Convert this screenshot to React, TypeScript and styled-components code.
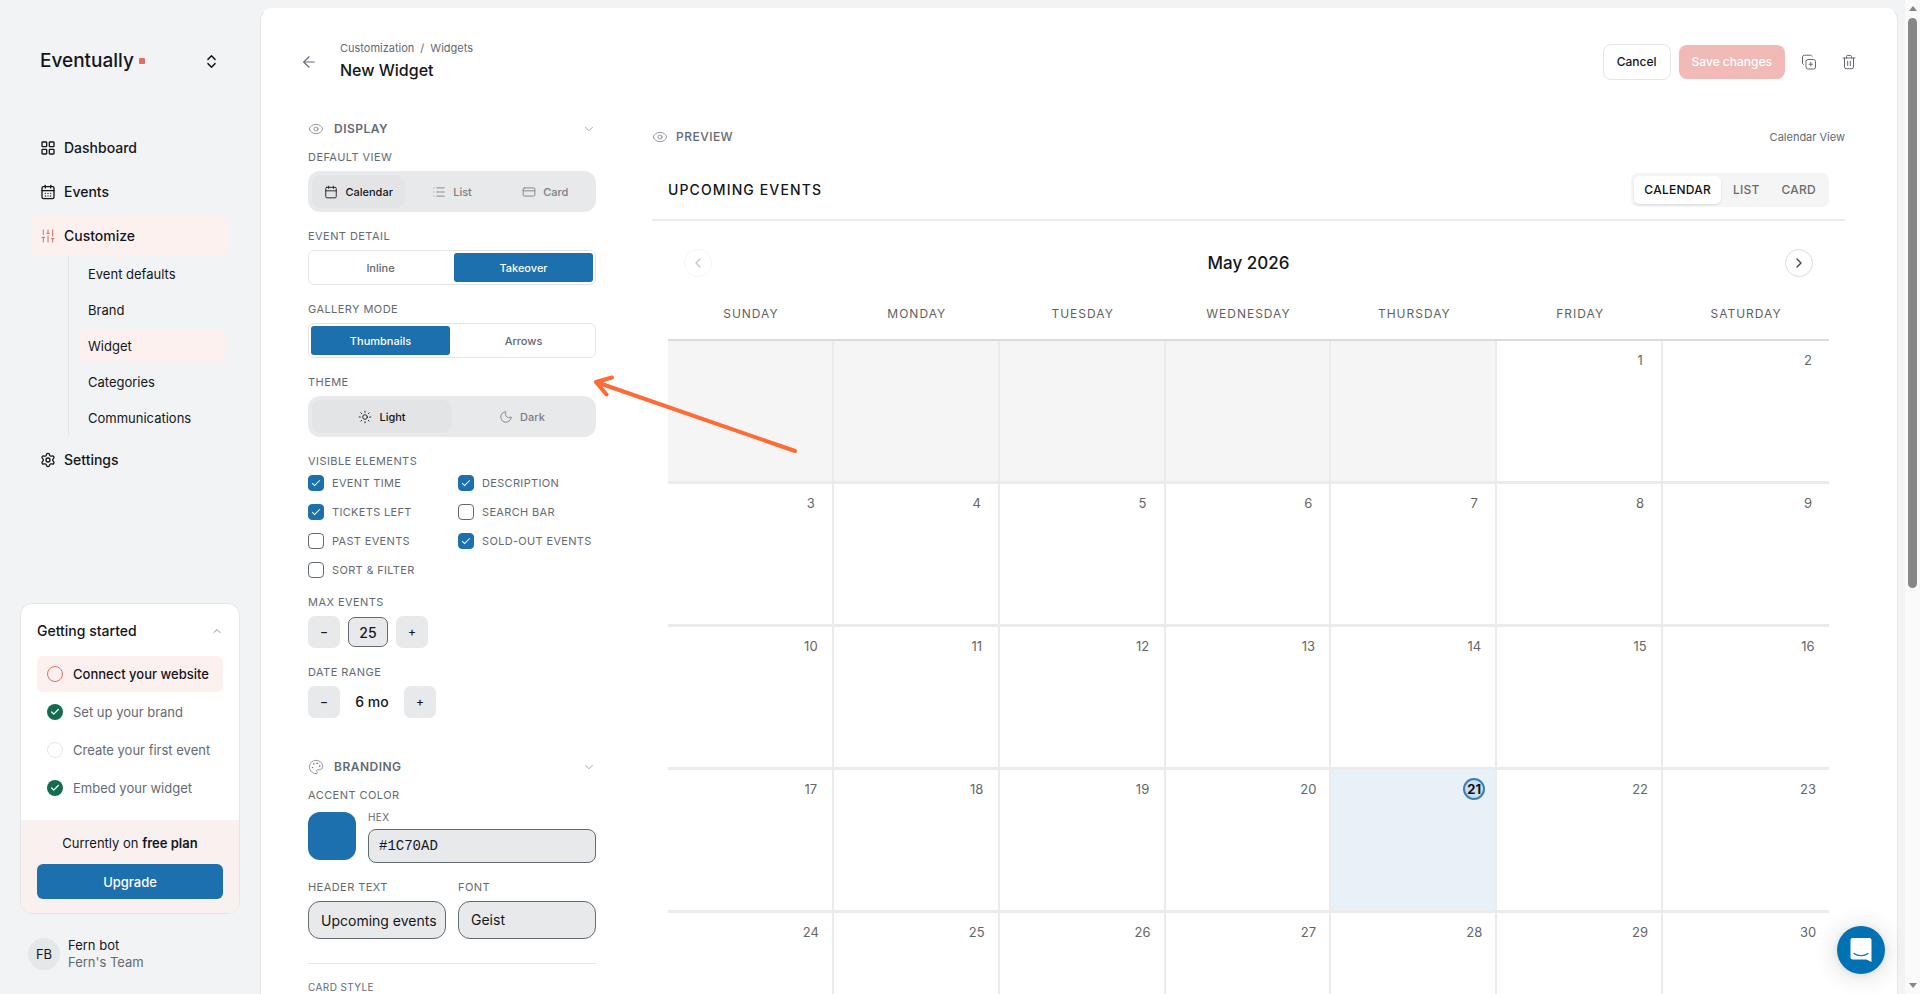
import React, { useState } from "react";
import styled, { createGlobalStyle, css } from "styled-components";
import {
  ArrowLeft,
  Calendar,
  CalendarDays,
  Check,
  ChevronDown,
  ChevronLeft,
  ChevronRight,
  ChevronsUpDown,
  ChevronUp,
  CreditCard,
  Eye,
  LayoutGrid,
  List,
  Moon,
  Palette,
  Settings,
  SlidersVertical,
  Sun,
} from "lucide-react";

const ink = "#14161c";
const muted = "#646a73";
const accent = "#1c70ad";
const line = "#e3e5e8";
const blush = "#fdf1ef";
const field = "#e8e9eb";

const GlobalStyle = createGlobalStyle`
  *, *::before, *::after { box-sizing: border-box; }
  body {
    margin: 0;
    background: #f1f3f4;
    color: ${ink};
    font-family: Inter, "Liberation Sans", sans-serif;
    font-size: 14px;
    line-height: 16px;
  }
  button, input, select { font: inherit; color: inherit; margin: 0; }
  button { cursor: pointer; border: 0; background: none; padding: 0; }
  a { color: inherit; text-decoration: none; }
  h1, h2, h3, p, ul { margin: 0; padding: 0; }
  ul { list-style: none; }
`;

const Shell = styled.div`
  position: relative;
  display: grid;
  grid-template-columns: 260px minmax(0, 1fr) 15px;
  height: 100vh;
  overflow: hidden;
`;

/* ---------- Sidebar ---------- */

const Sidebar = styled.aside`
  display: flex;
  flex-direction: column;
  padding: 45px 20px 23px;
  min-height: 0;
`;

const BrandButton = styled.button`
  display: flex;
  align-items: center;
  justify-content: space-between;
  height: 32px;
  padding: 0 20px;
  font-size: 19px;
  font-weight: 500;
  line-height: 24px;
`;

const BrandName = styled.span`
  display: flex;
  align-items: center;
  gap: 5px;
`;

const BrandDot = styled.span`
  width: 6px;
  height: 6px;
  border-radius: 1px;
  background: #e0705f;
`;

const Nav = styled.nav`
  display: flex;
  flex-direction: column;
  gap: 4px;
  padding: 0 12px;
  margin-top: 51px;
`;

const NavLink = styled.a<{ $active?: boolean }>`
  display: flex;
  align-items: center;
  gap: 8px;
  height: 40px;
  padding: 0 8px;
  border-radius: 6px;
  font-size: 14px;
  font-weight: 500;
  background: ${(p) => (p.$active ? blush : "transparent")};
  svg { color: ${(p) => (p.$active ? "#db6a5e" : "inherit")}; }
`;

const SubNav = styled.ul`
  display: flex;
  flex-direction: column;
  gap: 4px;
  margin: -4px 0 0 36px;
  padding: 2px 2px 2px 11px;
  border-left: 1px solid ${line};
`;

const SubLink = styled.a<{ $active?: boolean }>`
  display: flex;
  align-items: center;
  height: 32px;
  padding: 0 8px;
  border-radius: 4px;
  font-size: 13px;
  background: ${(p) => (p.$active ? blush : "transparent")};
`;

const StartCard = styled.section`
  margin-top: auto;
  border: 1px solid ${line};
  border-radius: 12px;
  background: #fff;
  overflow: hidden;
`;

const StartTop = styled.div`
  padding: 17px 16px 14px;
`;

const StartTitle = styled.h2`
  display: flex;
  align-items: center;
  justify-content: space-between;
  height: 20px;
  margin-bottom: 15px;
  font-size: 14px;
  font-weight: 500;
  svg { color: ${muted}; }
`;

const Steps = styled.ul`
  display: flex;
  flex-direction: column;
  gap: 2px;
`;

const Step = styled.li<{ $current?: boolean }>`
  display: flex;
  align-items: center;
  gap: 10px;
  height: 36px;
  padding: 0 10px;
  border-radius: 6px;
  font-size: 13px;
  color: ${(p) => (p.$current ? ink : muted)};
  font-weight: ${(p) => (p.$current ? 500 : 400)};
  background: ${(p) => (p.$current ? blush : "transparent")};
`;

const StepMark = styled.span<{ $state: "done" | "current" | "todo" }>`
  display: grid;
  place-items: center;
  width: 16px;
  height: 16px;
  border-radius: 50%;
  color: #fff;
  ${(p) =>
    p.$state === "done"
      ? css`background: #146c50;`
      : css`border: 1px solid ${p.$state === "current" ? "#e0706b" : line};`}
`;

const Plan = styled.div`
  display: flex;
  flex-direction: column;
  gap: 13px;
  padding: 15px 16px 14px;
  background: #f9f1ef;
  text-align: center;
  font-size: 13px;
  b { font-weight: 600; }
`;

const UpgradeButton = styled.button`
  height: 35px;
  border-radius: 6px;
  background: ${accent};
  color: #fff;
  font-size: 13px;
  font-weight: 500;
`;

const User = styled.div`
  display: flex;
  align-items: center;
  gap: 8px;
  margin-top: 23px;
  padding: 0 8px;
  font-size: 13px;
  line-height: 17px;
  span { display: block; }
  span + span { color: ${muted}; }
`;

const Avatar = styled.div`
  display: grid;
  place-items: center;
  width: 32px;
  height: 32px;
  border-radius: 50%;
  background: #e6e7e8;
`;

/* ---------- Main card ---------- */

const MainArea = styled.main`
  min-height: 0;
  padding: 8px 7px 0 0;
  overflow: hidden auto;
  scrollbar-width: none;
`;

const MainCard = styled.div`
  min-height: 100%;
  border: 1px solid ${line};
  border-top-color: #fff;
  border-radius: 12px;
  background: #fff;
`;

const TopBar = styled.header`
  display: flex;
  align-items: center;
  justify-content: space-between;
  padding: 32px 32px 0;
  height: 74px;
`;

const TitleGroup = styled.div`
  display: flex;
  align-items: center;
  gap: 15px;
`;

const TitleText = styled.div`
  padding-bottom: 3px;
`;

const IconButton = styled.button`
  display: grid;
  place-items: center;
  width: 32px;
  height: 32px;
  color: ${muted};
`;

const Crumbs = styled.nav`
  display: flex;
  gap: 6px;
  margin-bottom: 3px;
  font-size: 11px;
  color: ${muted};
`;

const PageTitle = styled.h1`
  font-size: 16px;
  font-weight: 500;
  line-height: 22px;
`;

const Actions = styled.div`
  display: flex;
  align-items: center;
  gap: 8px;
`;

const ActionButton = styled.button<{ $primary?: boolean }>`
  height: ${(p) => (p.$primary ? 34 : 36)}px;
  padding: 0 13px;
  border-radius: 8px;
  font-size: 12px;
  font-weight: 500;
  ${(p) =>
    p.$primary
      ? css`background: #f1bab6; color: #fff;`
      : css`border: 1px solid ${line}; background: #fff;`}
`;

const Columns = styled.div`
  display: flex;
  gap: 56px;
  padding: 37px 52px 40px 47px;
`;

/* ---------- Options panel ---------- */

const Options = styled.div`
  flex: none;
  width: 288px;
`;

const Section = styled.section`
  display: flex;
  flex-direction: column;
  gap: 16px;
  & + & { margin-top: 40px; }
`;

const SectionHead = styled.button`
  display: flex;
  align-items: center;
  gap: 10px;
  width: 100%;
  height: 18px;
  margin-bottom: -5px;
  font-size: 12px;
  font-weight: 600;
  letter-spacing: 0.04em;
  color: ${muted};
  svg:last-child { margin-left: auto; }
`;

const Field = styled.div`
  display: flex;
  flex-direction: column;
  gap: 6px;
`;

const Caption = styled.span<{ $light?: boolean }>`
  display: block;
  height: 16px;
  font-size: ${(p) => (p.$light ? 10 : 11)}px;
  letter-spacing: 0.04em;
  color: ${muted};
`;

const Pills = styled.div`
  display: flex;
  height: 41px;
  padding: 4px;
  border-radius: 12px;
  background: ${field};
`;

const Pill = styled.button<{ $on: boolean }>`
  display: flex;
  flex: 1;
  align-items: center;
  justify-content: center;
  gap: 7px;
  border-radius: 9px;
  font-size: 11px;
  font-weight: 500;
  color: ${(p) => (p.$on ? ink : "#7a7e85")};
  background: ${(p) => (p.$on ? "#e3e4e6" : "transparent")};
`;

const Switcher = styled.div`
  display: flex;
  gap: 4px;
  height: 35px;
  padding: 2px;
  border: 1px solid ${line};
  border-radius: 6px;
`;

const SwitchButton = styled.button<{ $on: boolean }>`
  flex: 1;
  border-radius: 3px;
  font-size: 11px;
  font-weight: 500;
  color: ${(p) => (p.$on ? "#fff" : muted)};
  background: ${(p) => (p.$on ? accent : "transparent")};
`;

const CheckGrid = styled.div`
  display: grid;
  grid-template-columns: 150px 1fr;
  row-gap: 13px;
`;

const CheckLabel = styled.label`
  display: flex;
  align-items: center;
  gap: 8px;
  height: 16px;
  font-size: 11px;
  letter-spacing: 0.03em;
  white-space: nowrap;
  color: ${muted};
`;

const CheckBox = styled.input`
  appearance: none;
  display: grid;
  place-items: center;
  flex: none;
  width: 16px;
  height: 16px;
  border: 1px solid #646a73;
  border-radius: 4px;
  background: #fff;
  &:checked { background: ${accent}; border-color: ${accent}; }
  &:checked::after {
    content: "";
    width: 8px;
    height: 4px;
    margin-bottom: 2px;
    border: solid #fff;
    border-width: 0 0 1px 1px;
    transform: rotate(-45deg);
  }
`;

const Stepper = styled.div`
  display: flex;
  align-items: center;
  gap: 8px;
  height: 32px;
`;

const StepButton = styled.button`
  width: 32px;
  height: 32px;
  border-radius: 7px;
  background: ${field};
  font-size: 12px;
  font-weight: 500;
`;

const CountInput = styled.input`
  width: 40px;
  height: 30px;
  padding: 0;
  border: 1px solid #646a73;
  border-radius: 7px;
  background: ${field};
  text-align: center;
  font-size: 14px;
  font-weight: 500;
`;

const RangeValue = styled.output`
  width: 48px;
  text-align: center;
  font-size: 14px;
  font-weight: 500;
`;

const ColorRow = styled.div`
  display: flex;
  align-items: center;
  gap: 12px;
`;

const Swatch = styled.button`
  width: 48px;
  height: 48px;
  border-radius: 12px;
  background: ${accent};
`;

const FieldLabel = styled.label<{ $gap?: number }>`
  display: flex;
  flex: 1;
  flex-direction: column;
  gap: ${(p) => p.$gap ?? 6}px;
  min-width: 0;
`;

const fieldBox = css`
  width: 100%;
  border: 1px solid #646a73;
  background: ${field};
`;

const HexInput = styled.input`
  ${fieldBox}
  height: 34px;
  padding: 0 10px;
  border-radius: 8px;
  font-family: "Liberation Mono", monospace;
  font-size: 14px;
`;

const TextInput = styled.input`
  ${fieldBox}
  height: 38px;
  padding: 0 6px 0 12px;
  border-radius: 12px;
`;

const FontSelect = styled.select`
  ${fieldBox}
  appearance: none;
  height: 38px;
  padding: 0 12px;
  border-radius: 12px;
`;

const Pair = styled.div`
  display: flex;
  gap: 12px;
`;

const StyleBlock = styled.div`
  margin-top: 8px;
  padding-top: 15px;
  border-top: 1px solid ${line};
`;

/* ---------- Preview ---------- */

const Preview = styled.section`
  flex: 1;
  min-width: 0;
`;

const PreviewHead = styled.div`
  display: flex;
  align-items: center;
  justify-content: space-between;
  height: 34px;
  font-size: 11px;
  color: ${muted};
`;

const PreviewTitle = styled.h2`
  display: flex;
  align-items: center;
  gap: 8px;
  font-size: 12px;
  font-weight: 500;
  letter-spacing: 0.04em;
`;

const WidgetHead = styled.div`
  display: flex;
  align-items: center;
  justify-content: space-between;
  margin-top: 7px;
  height: 60px;
  padding: 0 16px;
  border-bottom: 2px solid #ebecec;
`;

const WidgetTitle = styled.h3`
  font-size: 14px;
  font-weight: 500;
  letter-spacing: 0.08em;
`;

const Tabs = styled.div`
  display: flex;
  gap: 2px;
  height: 34px;
  padding: 3px;
  border-radius: 7px;
  background: #f5f5f5;
`;

const Tab = styled.button<{ $on: boolean }>`
  padding: 0 10px;
  border-radius: 5px;
  font-size: 12px;
  font-weight: 500;
  letter-spacing: 0.02em;
  color: ${(p) => (p.$on ? "#111" : "#6b6b6b")};
  background: ${(p) => (p.$on ? "#fff" : "transparent")};
  box-shadow: ${(p) => (p.$on ? "0 1px 2px rgba(0, 0, 0, 0.12)" : "none")};
`;

const MonthBar = styled.div`
  display: flex;
  align-items: center;
  justify-content: space-between;
  height: 84px;
  padding: 0 32px;
  font-size: 17px;
  font-weight: 500;
`;

const RoundButton = styled.button`
  display: grid;
  place-items: center;
  width: 28px;
  height: 28px;
  border: 1px solid #dcdcdc;
  border-radius: 50%;
  color: #444;
  &:disabled { opacity: 0.3; }
`;

const Month = styled.table`
  width: calc(100% - 32px);
  margin: 0 16px;
  table-layout: fixed;
  border-collapse: separate;
  border-spacing: 0;
`;

const Weekday = styled.th`
  height: 36px;
  padding: 0 0 16px;
  border-bottom: 2px solid #dadbdb;
  font-size: 12px;
  font-weight: 400;
  letter-spacing: 1px;
  color: #5f5f5f;
`;

const Day = styled.td<{ $kind: "blank" | "today" | "plain" }>`
  height: 143px;
  padding: 8px 10px 0 0;
  vertical-align: top;
  border-right: 2px solid #ebebeb;
  border-bottom: 3px solid #ebebeb;
  background: ${(p) =>
    p.$kind === "blank" ? "#f5f5f5" : p.$kind === "today" ? "#e9f1f8" : "#fff"};
  &:last-child { border-right: 0; }
`;

const DayNumber = styled.span<{ $today: boolean }>`
  display: grid;
  place-items: center;
  width: 22px;
  height: 22px;
  margin-left: auto;
  border-radius: 50%;
  font-size: 13px;
  color: #666;
  ${(p) =>
    p.$today &&
    css`
      border: 2px solid #3c7fb4;
      background: #c9dff0;
      color: #111;
      font-weight: 700;
    `}
`;

/* ---------- Overlays ---------- */

const ScrollTrack = styled.div`
  display: flex;
  flex-direction: column;
  align-items: center;
  padding: 6px 0;
  background: #fafafa;
`;

const ScrollArrow = styled.span<{ $down?: boolean }>`
  border: 4px solid transparent;
  border-${(p) => (p.$down ? "top" : "bottom")}: 5px solid #858585;
  border-${(p) => (p.$down ? "bottom" : "top")}-width: 0;
`;

const ScrollThumb = styled.span`
  width: 9px;
  height: 58%;
  margin: 7px 0 auto;
  border-radius: 5px;
  background: #878787;
`;

const Pointer = styled.svg`
  position: absolute;
  left: 588px;
  top: 368px;
  pointer-events: none;
`;

const ChatButton = styled.button`
  position: absolute;
  right: 35px;
  bottom: 20px;
  display: grid;
  place-items: center;
  width: 48px;
  height: 48px;
  border-radius: 50%;
  background: #0071b2;
  box-shadow: 0 2px 24px rgba(0, 0, 0, 0.16), 0 1px 6px rgba(0, 0, 0, 0.06);
`;

const thin = { size: 16, strokeWidth: 1 };

const DuplicateIcon = () => (
  <svg width="16" height="16" viewBox="0 0 16 16" fill="none" stroke="currentColor" strokeLinecap="round" strokeLinejoin="round">
    <rect x="5" y="5.500" width="9.500" height="9.500" rx="2" />
    <path d="M9.750 8.500v3.500M8 10.250h3.500M2.500 10.500A1.600 1.600 0 0 1 1.500 9V3a1.900 1.900 0 0 1 2-1.800h6A1.600 1.600 0 0 1 11 2.200" />
  </svg>
);

const TrashIcon = () => (
  <svg width="16" height="16" viewBox="0 0 16 16" fill="none" stroke="currentColor" strokeLinecap="round" strokeLinejoin="round">
    <path d="M2 4h12M3.500 4v9A1.700 1.700 0 0 0 5.200 14.700h5.600A1.700 1.700 0 0 0 12.500 13V4M5.500 4V2.700A1.300 1.300 0 0 1 6.800 1.400h2.400a1.300 1.300 0 0 1 1.300 1.300V4M6.700 7.200v4.300M9.300 7.200v4.300" />
  </svg>
);

type Option = { label: string; icon?: React.ReactNode };

function PillGroup({ options, initial, name }: { options: Option[]; initial: string; name: string }) {
  const [value, setValue] = useState(initial);
  return (
    <Pills role="group" aria-labelledby={name}>
      {options.map((o) => (
        <Pill key={o.label} type="button" $on={value === o.label} aria-pressed={value === o.label} onClick={() => setValue(o.label)}>
          {o.icon}
          {o.label}
        </Pill>
      ))}
    </Pills>
  );
}

function SwitchGroup({ options, initial, name }: { options: string[]; initial: string; name: string }) {
  const [value, setValue] = useState(initial);
  return (
    <Switcher role="group" aria-labelledby={name}>
      {options.map((o) => (
        <SwitchButton key={o} type="button" $on={value === o} aria-pressed={value === o} onClick={() => setValue(o)}>
          {o}
        </SwitchButton>
      ))}
    </Switcher>
  );
}

const subLinks = ["Event defaults", "Brand", "Widget", "Categories", "Communications"];

const steps: { label: string; state: "done" | "current" | "todo" }[] = [
  { label: "Connect your website", state: "current" },
  { label: "Set up your brand", state: "done" },
  { label: "Create your first event", state: "todo" },
  { label: "Embed your widget", state: "done" },
];

const elements: [string, boolean][] = [
  ["EVENT TIME", true],
  ["DESCRIPTION", true],
  ["TICKETS LEFT", true],
  ["SEARCH BAR", false],
  ["PAST EVENTS", false],
  ["SOLD-OUT EVENTS", true],
  ["SORT & FILTER", false],
];

const weekdays = ["SUNDAY", "MONDAY", "TUESDAY", "WEDNESDAY", "THURSDAY", "FRIDAY", "SATURDAY"];
const firstWeekday = 5;
const today = 21;
const weeks = Array.from({ length: 5 }, (_, w) =>
  Array.from({ length: 7 }, (_, d) => {
    const n = w * 7 + d - firstWeekday + 1;
    return n >= 1 ? n : null;
  })
);

function SidebarPanel() {
  return (
    <Sidebar>
      <BrandButton type="button">
        <BrandName>
          Eventually <BrandDot />
        </BrandName>
        <ChevronsUpDown size={17} strokeWidth={2} />
      </BrandButton>
      <Nav>
        <NavLink href="#dashboard"><LayoutGrid size={16} /> Dashboard</NavLink>
        <NavLink href="#events"><CalendarDays size={16} /> Events</NavLink>
        <NavLink href="#customize" $active><SlidersVertical size={16} strokeWidth={1.5} /> Customize</NavLink>
        <SubNav>
          {subLinks.map((l) => (
            <li key={l}><SubLink href="#customize" $active={l === "Widget"}>{l}</SubLink></li>
          ))}
        </SubNav>
        <NavLink href="#settings"><Settings size={16} /> Settings</NavLink>
      </Nav>
      <StartCard>
        <StartTop>
          <StartTitle>Getting started <ChevronUp size={12} strokeWidth={1.5} /></StartTitle>
          <Steps>
            {steps.map((s) => (
              <Step key={s.label} $current={s.state === "current"}>
                <StepMark $state={s.state}>{s.state === "done" && <Check size={10} strokeWidth={3} />}</StepMark>
                {s.label}
              </Step>
            ))}
          </Steps>
        </StartTop>
        <Plan>
          <p>Currently on <b>free plan</b></p>
          <UpgradeButton type="button">Upgrade</UpgradeButton>
        </Plan>
      </StartCard>
      <User>
        <Avatar>FB</Avatar>
        <div><span>Fern bot</span><span>Fern's Team</span></div>
      </User>
    </Sidebar>
  );
}

function OptionsPanel() {
  return (
    <Options>
      <Section>
        <SectionHead type="button"><Eye {...thin} /> DISPLAY <ChevronDown size={14} strokeWidth={1} /></SectionHead>
        <Field>
          <Caption id="default-view">DEFAULT VIEW</Caption>
          <PillGroup
            name="default-view"
            initial="Calendar"
            options={[
              { label: "Calendar", icon: <Calendar size={14} strokeWidth={1.5} /> },
              { label: "List", icon: <List size={14} strokeWidth={1.5} /> },
              { label: "Card", icon: <CreditCard size={14} strokeWidth={1.5} /> },
            ]}
          />
        </Field>
        <Field>
          <Caption id="event-detail">EVENT DETAIL</Caption>
          <SwitchGroup name="event-detail" options={["Inline", "Takeover"]} initial="Takeover" />
        </Field>
        <Field>
          <Caption id="gallery-mode">GALLERY MODE</Caption>
          <SwitchGroup name="gallery-mode" options={["Thumbnails", "Arrows"]} initial="Thumbnails" />
        </Field>
        <Field>
          <Caption id="theme">THEME</Caption>
          <PillGroup
            name="theme"
            initial="Light"
            options={[
              { label: "Light", icon: <Sun size={14} strokeWidth={1.5} /> },
              { label: "Dark", icon: <Moon size={14} strokeWidth={1.5} /> },
            ]}
          />
        </Field>
        <Field>
          <Caption id="visible-elements">VISIBLE ELEMENTS</Caption>
          <CheckGrid role="group" aria-labelledby="visible-elements">
            {elements.map(([label, on]) => (
              <CheckLabel key={label}><CheckBox type="checkbox" defaultChecked={on} /> {label}</CheckLabel>
            ))}
          </CheckGrid>
        </Field>
        <Field>
          <Caption as="label" htmlFor="max-events">MAX EVENTS</Caption>
          <Stepper>
            <StepButton type="button" aria-label="Fewer events">−</StepButton>
            <CountInput id="max-events" defaultValue="25" />
            <StepButton type="button" aria-label="More events">+</StepButton>
          </Stepper>
        </Field>
        <Field>
          <Caption>DATE RANGE</Caption>
          <Stepper>
            <StepButton type="button" aria-label="Shorter range">−</StepButton>
            <RangeValue>6 mo</RangeValue>
            <StepButton type="button" aria-label="Longer range">+</StepButton>
          </Stepper>
        </Field>
      </Section>
      <Section>
        <SectionHead type="button"><Palette {...thin} /> BRANDING <ChevronDown size={14} strokeWidth={1} /></SectionHead>
        <Field>
          <Caption>ACCENT COLOR</Caption>
          <ColorRow>
            <Swatch type="button" aria-label="Pick accent color" />
            <FieldLabel $gap={4}>
              <Caption $light>HEX</Caption>
              <HexInput defaultValue="#1C70AD" />
            </FieldLabel>
          </ColorRow>
        </Field>
        <Pair>
          <FieldLabel><Caption>HEADER TEXT</Caption><TextInput defaultValue="Upcoming events" /></FieldLabel>
          <FieldLabel><Caption>FONT</Caption><FontSelect><option>Geist</option></FontSelect></FieldLabel>
        </Pair>
        <StyleBlock><Caption $light>CARD STYLE</Caption></StyleBlock>
      </Section>
    </Options>
  );
}

function PreviewPanel() {
  const [view, setView] = useState("CALENDAR");
  return (
    <Preview>
      <PreviewHead>
        <PreviewTitle><Eye {...thin} /> PREVIEW</PreviewTitle>
        <span>Calendar View</span>
      </PreviewHead>
      <WidgetHead>
        <WidgetTitle>UPCOMING EVENTS</WidgetTitle>
        <Tabs>
          {["CALENDAR", "LIST", "CARD"].map((t) => (
            <Tab key={t} type="button" $on={view === t} aria-pressed={view === t} onClick={() => setView(t)}>{t}</Tab>
          ))}
        </Tabs>
      </WidgetHead>
      <MonthBar>
        <RoundButton type="button" disabled aria-label="Previous month"><ChevronLeft size={16} /></RoundButton>
        <span>May 2026</span>
        <RoundButton type="button" aria-label="Next month"><ChevronRight size={16} /></RoundButton>
      </MonthBar>
      <Month>
        <thead>
          <tr>{weekdays.map((d) => <Weekday key={d} scope="col">{d}</Weekday>)}</tr>
        </thead>
        <tbody>
          {weeks.map((week, w) => (
            <tr key={w}>
              {week.map((n, d) => (
                <Day key={d} $kind={n === null ? "blank" : n === today ? "today" : "plain"}>
                  {n !== null && <DayNumber $today={n === today}>{n}</DayNumber>}
                </Day>
              ))}
            </tr>
          ))}
        </tbody>
      </Month>
    </Preview>
  );
}

export default function App() {
  return (
    <>
      <GlobalStyle />
      <Shell>
        <SidebarPanel />
        <MainArea>
          <MainCard>
            <TopBar>
              <TitleGroup>
                <IconButton type="button" aria-label="Back"><ArrowLeft size={18} strokeWidth={1.5} /></IconButton>
                <TitleText>
                  <Crumbs aria-label="Breadcrumb">
                    <a href="#customization">Customization</a>
                    <span>/</span>
                    <a href="#widgets">Widgets</a>
                  </Crumbs>
                  <PageTitle>New Widget</PageTitle>
                </TitleText>
              </TitleGroup>
              <Actions>
                <ActionButton type="button">Cancel</ActionButton>
                <ActionButton type="button" $primary>Save changes</ActionButton>
                <IconButton type="button" aria-label="Duplicate"><DuplicateIcon /></IconButton>
                <IconButton type="button" aria-label="Delete"><TrashIcon /></IconButton>
              </Actions>
            </TopBar>
            <Columns>
              <OptionsPanel />
              <PreviewPanel />
            </Columns>
          </MainCard>
        </MainArea>
        <ScrollTrack aria-hidden="true">
          <ScrollArrow />
          <ScrollThumb />
          <ScrollArrow $down />
        </ScrollTrack>
        <Pointer width="216" height="92" viewBox="588 368 216 92" fill="none" stroke="#ff6a35" strokeWidth="4" strokeLinecap="round" strokeLinejoin="round" aria-hidden="true">
          <path d="M795 451 596 382M612 377.500 596 382l10.500 12.500" />
        </Pointer>
        <ChatButton type="button" aria-label="Open chat">
          <svg width="22" height="24" viewBox="0 0 22 24" aria-hidden="true">
            <path d="M2.500 0h17a2 2 0 0 1 2 2v22l-5-2.500h-14a2 2 0 0 1-2-2V2a2 2 0 0 1 2-2Z" fill="#fff" />
            <path d="M4 15.500c4 3 10 3 14 0" fill="none" stroke="#0071b2" strokeWidth="1.200" strokeLinecap="round" />
          </svg>
        </ChatButton>
      </Shell>
    </>
  );
}
